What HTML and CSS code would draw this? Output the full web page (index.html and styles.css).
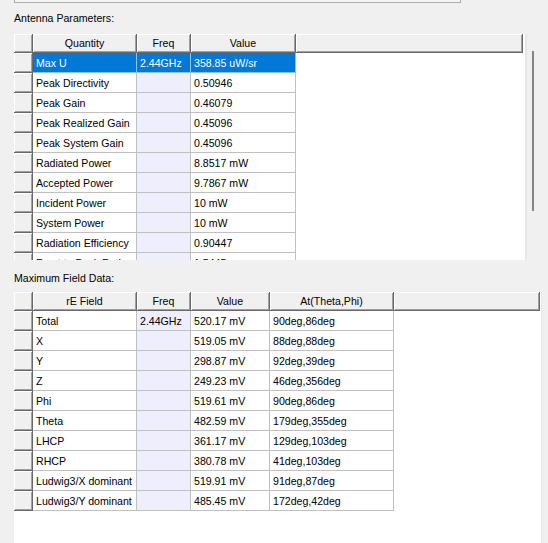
FILE: index.html
```html
<!DOCTYPE html>
<html>
<head>
<meta charset="utf-8">
<link rel="stylesheet" href="styles.css">
</head>
<body>
<div class="topbox"></div>
<div class="label label-first">Antenna Parameters:</div>
<div class="section">
  <div class="panel panel-a">
    <div class="row hdr cols-a">
      <div class="corner"></div><div class="hc">Quantity</div><div class="hc">Freq</div><div class="hc">Value</div><div class="hc"></div>
    </div>
    <div class="row cols-a sel">
      <div class="rh"></div><div class="c">Max U</div><div class="c">2.44GHz</div><div class="c">358.85 uW/sr</div><div class="e"></div>
    </div>
    <div class="row cols-a"><div class="rh"></div><div class="c">Peak Directivity</div><div class="c f"></div><div class="c">0.50946</div><div class="e"></div></div>
    <div class="row cols-a"><div class="rh"></div><div class="c">Peak Gain</div><div class="c f"></div><div class="c">0.46079</div><div class="e"></div></div>
    <div class="row cols-a"><div class="rh"></div><div class="c">Peak Realized Gain</div><div class="c f"></div><div class="c">0.45096</div><div class="e"></div></div>
    <div class="row cols-a"><div class="rh"></div><div class="c">Peak System Gain</div><div class="c f"></div><div class="c">0.45096</div><div class="e"></div></div>
    <div class="row cols-a"><div class="rh"></div><div class="c">Radiated Power</div><div class="c f"></div><div class="c">8.8517 mW</div><div class="e"></div></div>
    <div class="row cols-a"><div class="rh"></div><div class="c">Accepted Power</div><div class="c f"></div><div class="c">9.7867 mW</div><div class="e"></div></div>
    <div class="row cols-a"><div class="rh"></div><div class="c">Incident Power</div><div class="c f"></div><div class="c">10 mW</div><div class="e"></div></div>
    <div class="row cols-a"><div class="rh"></div><div class="c">System Power</div><div class="c f"></div><div class="c">10 mW</div><div class="e"></div></div>
    <div class="row cols-a"><div class="rh"></div><div class="c">Radiation Efficiency</div><div class="c f"></div><div class="c">0.90447</div><div class="e"></div></div>
    <div class="row cols-a"><div class="rh"></div><div class="c">Front to Back Ratio</div><div class="c f"></div><div class="c">1.5445</div><div class="e"></div></div>
  </div>
  <div class="thumb"></div>
</div>
<div class="label label-second">Maximum Field Data:</div>
<div class="panel panel-b">
  <div class="row hdr cols-b">
    <div class="corner"></div><div class="hc">rE Field</div><div class="hc">Freq</div><div class="hc">Value</div><div class="hc">At(Theta,Phi)</div><div class="hc"></div>
  </div>
  <div class="row cols-b"><div class="rh"></div><div class="c">Total</div><div class="c f">2.44GHz</div><div class="c">520.17 mV</div><div class="c">90deg,86deg</div><div class="e"></div></div>
  <div class="row cols-b"><div class="rh"></div><div class="c">X</div><div class="c f"></div><div class="c">519.05 mV</div><div class="c">88deg,88deg</div><div class="e"></div></div>
  <div class="row cols-b"><div class="rh"></div><div class="c">Y</div><div class="c f"></div><div class="c">298.87 mV</div><div class="c">92deg,39deg</div><div class="e"></div></div>
  <div class="row cols-b"><div class="rh"></div><div class="c">Z</div><div class="c f"></div><div class="c">249.23 mV</div><div class="c">46deg,356deg</div><div class="e"></div></div>
  <div class="row cols-b"><div class="rh"></div><div class="c">Phi</div><div class="c f"></div><div class="c">519.61 mV</div><div class="c">90deg,86deg</div><div class="e"></div></div>
  <div class="row cols-b"><div class="rh"></div><div class="c">Theta</div><div class="c f"></div><div class="c">482.59 mV</div><div class="c">179deg,355deg</div><div class="e"></div></div>
  <div class="row cols-b"><div class="rh"></div><div class="c">LHCP</div><div class="c f"></div><div class="c">361.17 mV</div><div class="c">129deg,103deg</div><div class="e"></div></div>
  <div class="row cols-b"><div class="rh"></div><div class="c">RHCP</div><div class="c f"></div><div class="c">380.78 mV</div><div class="c">41deg,103deg</div><div class="e"></div></div>
  <div class="row cols-b"><div class="rh"></div><div class="c">Ludwig3/X dominant</div><div class="c f"></div><div class="c">519.91 mV</div><div class="c">91deg,87deg</div><div class="e"></div></div>
  <div class="row cols-b"><div class="rh"></div><div class="c">Ludwig3/Y dominant</div><div class="c f"></div><div class="c">485.45 mV</div><div class="c">172deg,42deg</div><div class="e"></div></div>
</div>
</body>
</html>
```

FILE: styles.css
```css
* { box-sizing: border-box; }
html, body { margin: 0; padding: 0; }
body {
  background: #f0f0f0;
  font-family: "Liberation Sans", Arial, sans-serif;
  font-size: 10.6px;
  color: #000;
  padding-left: 14px;
  height: 543px;
  overflow: hidden;
}
.topbox {
  width: 447px;
  height: 3px;
  border: 1px solid #adadad;
  border-top: none;
  background: #f4f4f4;
}
.label {
  height: 14px;
  line-height: 14px;
}
.label-first { margin-top: 8px; margin-bottom: 9px; }
.label-second { margin-top: 11px; margin-bottom: 7px; }
.section {
  display: flex;
  align-items: flex-start;
  gap: 5px;
}
.panel {
  background: #fff;
  overflow: hidden;
}
.panel-a {
  width: 513px;
  height: 226px;
  border-right: 2px solid #e6e6e6;
}
.panel-b {
  width: 528px;
  height: 260px;
  border-right: 1px solid #e6e6e6;
}
.thumb {
  width: 2px;
  height: 160px;
  margin-top: 17px;
  background: #858585;
}
.row {
  display: grid;
  height: 20px;
}
.row.hdr { height: 19px; }
.cols-a { grid-template-columns: 19px 104px 54px 105px 227px; }
.cols-b { grid-template-columns: 19px 104px 54px 79px 124px 146px; }
.corner, .hc, .rh {
  background: #f0f0f0;
  box-shadow: inset 1px 1px 0 #fff, inset -1px -1px 0 #a0a0a0;
  border-right: 1px solid #696969;
  border-bottom: 1px solid #696969;
}
.hc {
  display: flex;
  align-items: center;
  justify-content: center;
  white-space: nowrap;
  overflow: hidden;
}
.c {
  border-right: 1px solid #c0c0c0;
  border-bottom: 1px solid #c0c0c0;
  padding-left: 3px;
  display: flex;
  align-items: center;
  white-space: nowrap;
  overflow: hidden;
}
.c.f { background: #eeeefc; }
.cols-a .c:nth-child(3) { background: #eeeefc; }
.e { background: #fff; }
.sel .c,
.sel .c:nth-child(3) {
  background: #0078d7;
  color: #fff;
  border-right-color: #8cc2ee;
  border-bottom-color: #8cc2ee;
}
```
